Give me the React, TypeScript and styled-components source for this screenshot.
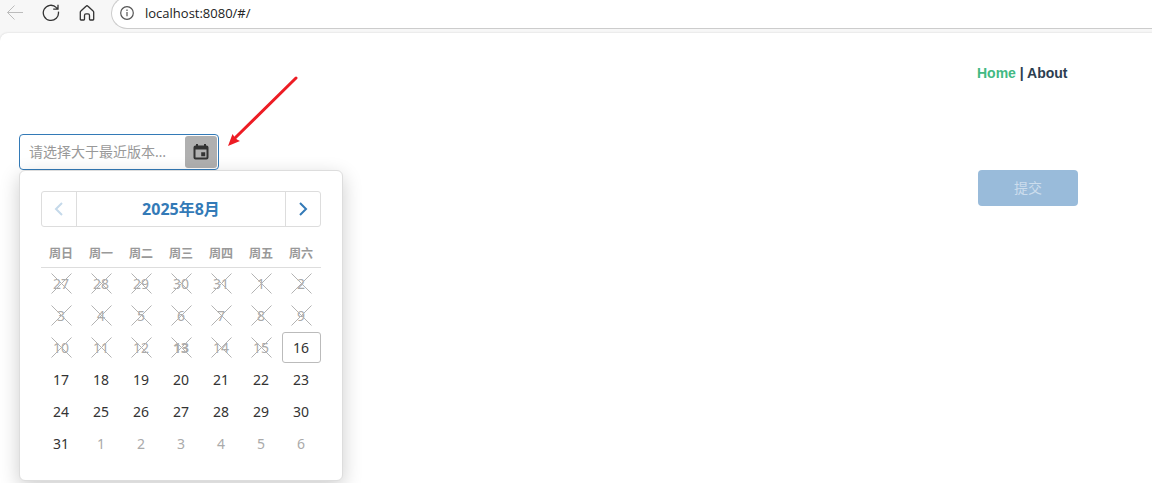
import React from "react";
import styled, { createGlobalStyle, css } from "styled-components";

const GlobalStyle = createGlobalStyle`
  * { box-sizing: border-box; }
  body {
    margin: 0;
    background: #f7f7f7;
    font-family: "Noto Sans", "Noto Sans CJK SC", sans-serif;
    font-size: 14px;
    color: #333;
  }
  button, input { font: inherit; }
`;

const Window = styled.div`
  display: flex;
  flex-direction: column;
  min-height: 100vh;
`;

const BrowserBar = styled.header`
  display: flex;
  align-items: flex-end;
  height: 33px;
  padding: 0 0 4px 6px;
  overflow: hidden;
  background: #f7f7f7;
`;

const BarButton = styled.button`
  display: flex;
  align-items: center;
  justify-content: center;
  width: 18px;
  height: 32px;
  margin-right: 18px;
  padding: 0;
  border: 0;
  background: none;
  color: #333;

  &:disabled { color: #bcbcbc; }
`;

const AddressBox = styled.label`
  display: flex;
  flex: 1;
  align-items: center;
  gap: 11px;
  height: 32px;
  margin-left: -3px;
  padding-left: 8px;
  border: 1px solid #ccc;
  border-right: 0;
  border-radius: 16px 0 0 16px;
  background: #fff;
  color: #555;
`;

const AddressInput = styled.input`
  flex: 1;
  padding: 0;
  border: 0;
  outline: 0;
  background: none;
  font-family: "Open Sans", sans-serif;
  font-size: 13px;
  color: #222;
`;

const Page = styled.main`
  flex: 1;
  padding: 31px 74px 0 19px;
  border-radius: 8px 0 0 0;
  background: #fff;
  box-shadow: 0 0 2px #ccc;
`;

const Nav = styled.nav`
  width: 101px;
  margin: 0 0 52px auto;
  font: bold 14px/18px "Liberation Sans", sans-serif;
  color: #2c3e50;
  white-space: nowrap;
`;

const NavLink = styled.a<{ $active?: boolean }>`
  color: ${(p) => (p.$active ? "#42b983" : "#2c3e50")};
  text-decoration: none;
`;

const Form = styled.form`
  display: flex;
  align-items: flex-start;
  justify-content: space-between;
`;

const DatePicker = styled.div`
  position: relative;
`;

const DateField = styled.div`
  display: flex;
  align-items: center;
  width: 200px;
  height: 36px;
  padding: 1px;
  border: 1px solid #337ab7;
  border-radius: 4px;
  background: #fff;
`;

const DateInput = styled.input`
  flex: 1;
  min-width: 0;
  height: 32px;
  padding: 0 8px 2px;
  border: 0;
  outline: 0;
  background: none;
  text-overflow: ellipsis;

  &::placeholder { color: #999; opacity: 1; }
`;

const CalendarButton = styled.button`
  display: flex;
  align-items: center;
  justify-content: center;
  width: 32px;
  height: 32px;
  padding: 0;
  border: 0;
  border-radius: 3px;
  background: #b0b0b0;
  color: #333;
`;

const Popup = styled.div`
  position: absolute;
  top: 100%;
  left: 0;
  width: 324px;
  padding: 20px 20px 21px 21px;
  border: 1px solid #ddd;
  border-radius: 6px;
  background: #fff;
  box-shadow: 0 6px 20px rgba(0, 0, 0, 0.2);
`;

const MonthBar = styled.div`
  display: flex;
  width: 280px;
  height: 36px;
  border: 1px solid #ddd;
  border-radius: 3px;
`;

const monthPart = css`
  display: flex;
  align-items: center;
  justify-content: center;
  padding: 0;
  border: 0;
  background: none;
  color: #337ab7;
`;

const MonthStep = styled.button`
  ${monthPart}
  width: 34px;
  &:disabled { color: #c5d9ea; }
`;

const MonthTitle = styled.button`
  ${monthPart}
  flex: 1;
  padding-bottom: 2px;
  border: solid #ddd;
  border-width: 0 1px;
  font-size: 16px;
  font-weight: bold;
`;

const Days = styled.table`
  width: 280px;
  margin-top: 12px;
  border-collapse: collapse;
  table-layout: fixed;
`;

const WeekDay = styled.th`
  height: 28px;
  padding: 0;
  border-bottom: 1px solid #ddd;
  font-size: 12px;
  color: #999;
`;

const DayCell = styled.td`
  height: 32px;
  padding: 0;
`;

type DayState = "normal" | "disabled" | "outside" | "focused";

const DayButton = styled.button<{ $state: DayState; $today: boolean }>`
  position: relative;
  display: flex;
  align-items: center;
  justify-content: center;
  width: 39px;
  height: 31px;
  padding: 0 1px 0 0;
  margin-left: 1px;
  border: 1px solid ${(p) => (p.$state === "focused" ? "#bbb" : "transparent")};
  border-radius: 3px;
  background: none;
  font-weight: ${(p) => (p.$today ? "bold" : "normal")};
  color: ${(p) => (p.$state === "disabled" || p.$state === "outside" ? "#aaa" : "#333")};
`;

const Cross = styled.svg`
  position: absolute;
  top: 4px;
  left: 8px;
  color: #b3b3b3;
`;

const Submit = styled.button`
  width: 100px;
  height: 36px;
  margin-top: 36px;
  padding: 0 0 2px;
  border: 0;
  border-radius: 4px;
  background: #99bbda;
  color: #ccdded;
`;

const Arrow = styled.svg`
  position: absolute;
  top: -64px;
  left: 201px;
  pointer-events: none;
`;

const weekDays = ["周日", "周一", "周二", "周三", "周四", "周五", "周六"];

const weeks = [
  [27, 28, 29, 30, 31, 1, 2],
  [3, 4, 5, 6, 7, 8, 9],
  [10, 11, 12, 13, 14, 15, 16],
  [17, 18, 19, 20, 21, 22, 23],
  [24, 25, 26, 27, 28, 29, 30],
  [31, 1, 2, 3, 4, 5, 6],
];

function stateOf(week: number, column: number): DayState {
  const index = week * 7 + column;
  if (index < 20) return "disabled";
  if (index === 20) return "focused";
  return index > 35 ? "outside" : "normal";
}

const line = { fill: "none", stroke: "currentColor" };

function Day({ value, state, today }: { value: number; state: DayState; today: boolean }) {
  return (
    <DayButton type="button" $state={state} $today={today} disabled={state === "disabled"}>
      {value}
      {state === "disabled" && (
        <Cross width="21" height="21" viewBox="0 0 21 21" {...line}>
          <path d="M.5.5l20 20M20.5.5l-20 20" />
        </Cross>
      )}
    </DayButton>
  );
}

export default function App() {
  return (
    <Window>
      <GlobalStyle />
      <BrowserBar>
        <BarButton type="button" aria-label="Back" disabled>
          <svg width="18" height="18" viewBox="0 0 18 18" {...line}>
            <path d="M17 8.5H1.5M8.5 1.5l-7 7 7 7" />
          </svg>
        </BarButton>
        <BarButton type="button" aria-label="Refresh">
          <svg width="18" height="18" viewBox="0 0 18 18" {...line} strokeWidth="1.3">
            <path d="M16.4 7.6A7.6 7.6 0 1 1 14.4 3.6L15.8 5M16 .8V5.2H11.2" />
          </svg>
        </BarButton>
        <BarButton type="button" aria-label="Home">
          <svg width="18" height="18" viewBox="0 0 18 18" {...line} strokeWidth="1.3" strokeLinejoin="round">
            <path d="M2.3 8.2c0-.5.2-.9.6-1.2L8 2.2c.6-.6 1.4-.6 2 0L15.1 7c.4.3.6.7.6 1.2V15.3c0 .5-.2.7-.7.7h-2.8c-.5 0-.7-.2-.7-.7V11.5c0-1-.6-1.6-1.5-1.6H8c-.9 0-1.5.6-1.5 1.6v3.8c0 .5-.2.7-.7.7H3c-.5 0-.7-.2-.7-.7z" />
          </svg>
        </BarButton>
        <AddressBox>
          <svg width="14" height="14" viewBox="0 0 14 14" {...line} strokeWidth="1.2">
            <circle cx="7" cy="7" r="6.3" />
            <path d="M7 6v4.2M7 3.6v1.4" />
          </svg>
          <AddressInput aria-label="Address" defaultValue="localhost:8080/#/" />
        </AddressBox>
      </BrowserBar>
      <Page>
        <Nav>
          <NavLink href="#/" $active>Home</NavLink> | <NavLink href="#/about">About</NavLink>
        </Nav>
        <Form>
          <DatePicker>
            <DateField>
              <DateInput aria-label="日期" placeholder="请选择大于最近版本的日期" />
              <CalendarButton type="button" aria-label="日历">
                <svg width="16" height="16" viewBox="0 0 16 16" fill="currentColor">
                  <path
                    fillRule="evenodd"
                    d="M3 0h2v1.5h6V0h2v1.5h.5A2 2 0 0 1 15.5 3.5v10a2 2 0 0 1-2 2h-11a2 2 0 0 1-2-2v-10a2 2 0 0 1 2-2H3zM2.5 5.5v8h11v-8zM8.2 8.3h4v4h-4z"
                  />
                </svg>
              </CalendarButton>
            </DateField>
            <Popup>
              <MonthBar>
                <MonthStep type="button" aria-label="上个月" disabled>
                  <svg width="16" height="16" viewBox="0 0 16 16" {...line} strokeWidth="2">
                    <path d="M11 2L5 8l6 6" />
                  </svg>
                </MonthStep>
                <MonthTitle type="button">2025年8月</MonthTitle>
                <MonthStep type="button" aria-label="下个月">
                  <svg width="16" height="16" viewBox="0 0 16 16" {...line} strokeWidth="2">
                    <path d="M5 2l6 6-6 6" />
                  </svg>
                </MonthStep>
              </MonthBar>
              <Days>
                <thead>
                  <tr>
                    {weekDays.map((name) => (
                      <WeekDay key={name} scope="col">{name}</WeekDay>
                    ))}
                  </tr>
                </thead>
                <tbody>
                  {weeks.map((week, row) => (
                    <tr key={row}>
                      {week.map((value, column) => (
                        <DayCell key={column}>
                          <Day value={value} state={stateOf(row, column)} today={row === 2 && value === 13} />
                        </DayCell>
                      ))}
                    </tr>
                  ))}
                </tbody>
              </Days>
            </Popup>
            <Arrow width="80" height="80" viewBox="0 0 80 80" aria-hidden="true">
              <path d="M76 8L15 68" stroke="#ed1c24" strokeWidth="3" strokeLinecap="round" />
              <path d="M8 76L12.5 64 14.5 67 17 69.5 20 71z" fill="#ed1c24" />
            </Arrow>
          </DatePicker>
          <Submit type="button">提交</Submit>
        </Form>
      </Page>
    </Window>
  );
}
